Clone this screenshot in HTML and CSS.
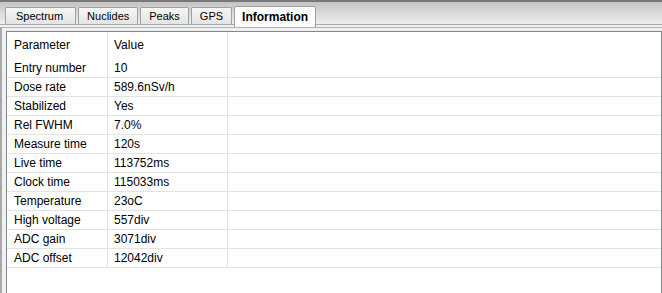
FILE: index.html
```html
<!DOCTYPE html>
<html lang="en">
<head>
  <meta charset="UTF-8">
  <title>Information</title>
  <link rel="stylesheet" href="styles.css">
</head>
<body>
  <div class="tabbar">
    <div class="tab">Spectrum</div>
    <div class="tab">Nuclides</div>
    <div class="tab">Peaks</div>
    <div class="tab">GPS</div>
    <div class="tab active">Information</div>
  </div>

  <div class="pane">
    <div class="pane-inner">
      <div class="grid">
        <table class="info">
          <tr class="head">
            <td class="param">Parameter</td>
            <td class="value">Value</td>
            <td></td>
          </tr>
          <tr><td class="param">Entry number</td><td class="value">10</td><td></td></tr>
          <tr><td class="param">Dose rate</td><td class="value">589.6nSv/h</td><td></td></tr>
          <tr><td class="param">Stabilized</td><td class="value">Yes</td><td></td></tr>
          <tr><td class="param">Rel FWHM</td><td class="value">7.0%</td><td></td></tr>
          <tr><td class="param">Measure time</td><td class="value">120s</td><td></td></tr>
          <tr><td class="param">Live time</td><td class="value">113752ms</td><td></td></tr>
          <tr><td class="param">Clock time</td><td class="value">115033ms</td><td></td></tr>
          <tr><td class="param">Temperature</td><td class="value">23oC</td><td></td></tr>
          <tr><td class="param">High voltage</td><td class="value">557div</td><td></td></tr>
          <tr><td class="param">ADC gain</td><td class="value">3071div</td><td></td></tr>
          <tr><td class="param">ADC offset</td><td class="value">12042div</td><td></td></tr>
        </table>
      </div>
    </div>
  </div>
</body>
</html>
```

FILE: styles.css
```css
html, body {
  height: 100%;
}

body {
  margin: 0;
  background: #f0f0f0;
  color: #000;
  font-family: 'Liberation Sans', Arial, sans-serif;
  display: flex;
  flex-direction: column;
  overflow: hidden;
}

/* Tab strip */
.tabbar {
  height: 22px;
  flex-shrink: 0;
  border-top: 2px solid #787878;
  background: linear-gradient(#c4c4c4, #eeeeee);
  display: flex;
  align-items: flex-end;
  gap: 2px;
  padding-left: 5px;
}

.tab {
  height: 16px;
  line-height: 16px;
  padding: 0 8px;
  font-size: 11px;
  color: #000;
  border: 1px solid #a0a0a0;
  border-bottom: none;
  border-radius: 2px 2px 0 0;
  background: linear-gradient(#f6f6f6, #e4e4e4);
}

.tab:first-child {
  padding: 0 12px 0 10px;
}

.tab.active {
  height: 20px;
  line-height: 20px;
  padding: 0 7px;
  margin-bottom: -3px;
  font-size: 12px;
  font-weight: bold;
  background: #fcfcfc;
  position: relative;
  z-index: 1;
}

/* Pane frame */
.pane {
  flex: 1;
  display: flex;
  flex-direction: column;
  border-top: 1px solid #a9a9a9;
}

.pane-inner {
  flex: 1;
  display: flex;
  flex-direction: column;
  margin-top: 2px;
  border-top: 1px solid #b4b4b4;
  border-left: 2px solid #a8a8a8;
  padding: 3px 0 0 4px;
}

.grid {
  flex: 1;
  background: #fff;
  border: 1px solid #828790;
  border-bottom: none;
}

/* Info table */
.info {
  width: 100%;
  border-collapse: collapse;
  font-size: 12px;
}

.info td {
  height: 18px;
  padding: 0 0 0 7px;
  white-space: nowrap;
}

.info tr {
  border-bottom: 1px solid #e3e3e3;
}

.info tr.head {
  border-bottom: none;
}

.info tr.head td {
  height: 25px;
  padding-bottom: 2px;
}

.info td.param {
  width: 93px;
  border-right: 1px solid #e3e3e3;
}

.info td.value {
  width: 113px;
  padding-left: 6px;
  border-right: 1px solid #e3e3e3;
}
```
